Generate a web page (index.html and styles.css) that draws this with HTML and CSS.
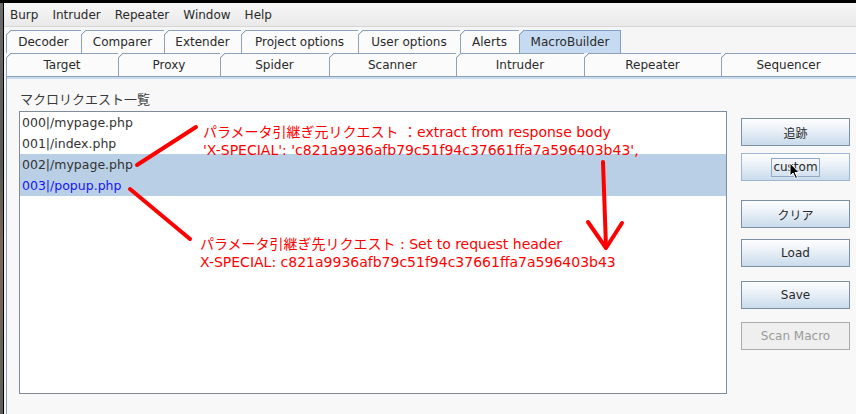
FILE: index.html
```html
<!DOCTYPE html>
<html lang="ja">
<head>
<meta charset="utf-8">
<title>MacroBuilder</title>
<link rel="stylesheet" href="styles.css">
</head>
<body>
<div class="topbar"></div>
<div class="main">
  <div class="desk"></div>
  <div class="window">
    <div class="menubar">
      <span class="menu">Burp</span>
      <span class="menu">Intruder</span>
      <span class="menu">Repeater</span>
      <span class="menu">Window</span>
      <span class="menu">Help</span>
    </div>
    <div class="tabs">
      <div class="tabrow row1">
        <div class="tab">Decoder</div>
        <div class="tab">Comparer</div>
        <div class="tab">Extender</div>
        <div class="tab">Project options</div>
        <div class="tab">User options</div>
        <div class="tab">Alerts</div>
        <div class="tab selected">MacroBuilder</div>
      </div>
      <div class="tabrow row2">
        <div class="tab">Target</div>
        <div class="tab">Proxy</div>
        <div class="tab">Spider</div>
        <div class="tab">Scanner</div>
        <div class="tab">Intruder</div>
        <div class="tab">Repeater</div>
        <div class="tab">Sequencer</div>
      </div>
    </div>
    <div class="panel">
      <div class="stripe"></div>
      <div class="panel-body">
        <div class="list-col">
          <div class="list-label">マクロリクエスト一覧</div>
          <div class="list">
            <div class="row">000|/mypage.php</div>
            <div class="row">001|/index.php</div>
            <div class="row sel">002|/mypage.php</div>
            <div class="row sel current">003|/popup.php</div>
          </div>
        </div>
        <div class="btn-col">
          <button class="btn gap-first">追跡</button>
          <button class="btn focused gap-7"><span class="focus-ring">custom</span></button>
          <button class="btn gap-19">クリア</button>
          <button class="btn gap-11">Load</button>
          <button class="btn gap-14">Save</button>
          <button class="btn disabled gap-13">Scan Macro</button>
        </div>
      </div>
    </div>
  </div>
</div>

<svg class="marks" width="856" height="414" viewBox="0 0 856 414">
  <g stroke="#ff0000" stroke-width="4" stroke-linecap="round" stroke-linejoin="round" fill="none">
    <path d="M137 165 L196 127"/>
    <path d="M130 189 L190 239"/>
    <path d="M603 162 L606 247"/>
    <path d="M588 222 L606 248 L622 223"/>
  </g>
</svg>

<div class="note note1">
  <div>パラメータ引継ぎ元リクエスト ：extract from response body</div>
  <div>'X-SPECIAL': 'c821a9936afb79c51f94c37661ffa7a596403b43',</div>
</div>
<div class="note note2">
  <div>パラメータ引継ぎ先リクエスト : Set to request header</div>
  <div>X-SPECIAL: c821a9936afb79c51f94c37661ffa7a596403b43</div>
</div>

<svg class="cursor" width="12" height="18" viewBox="0 0 12 18">
  <path d="M1 1 L1 14 L4 11 L6.5 16.5 L8.5 15.5 L6 10.5 L10 10.5 Z" fill="#000" stroke="#fff" stroke-width="1"/>
</svg>
</body>
</html>
```

FILE: styles.css
```css
* { box-sizing: border-box; }

html, body {
  margin: 0;
  padding: 0;
}

body {
  position: relative;
  width: 856px;
  height: 414px;
  overflow: hidden;
  display: flex;
  flex-direction: column;
  background: #f8f8f8;
  font-family: "DejaVu Sans", "Noto Sans CJK JP", sans-serif;
  font-size: 12px;
  color: #2a2a2a;
}

.topbar {
  height: 3px;
  background: #000;
  flex: none;
}

.main {
  flex: 1;
  display: flex;
  min-height: 0;
}

.desk {
  width: 4px;
  flex: none;
  background: linear-gradient(#6b6b6b, #585858 40%, #7a6a5a 60%, #5e5e5e);
  border-right: 1px solid #000;
}

.window {
  flex: 1;
  display: flex;
  flex-direction: column;
  background: #f6f6f6;
  min-width: 0;
}

/* menu bar */
.menubar {
  height: 24px;
  flex: none;
  display: flex;
  align-items: center;
  gap: 14px;
  padding-left: 6px;
  background: linear-gradient(#f7f7f7, #e9e9e9);
  border-bottom: 1px solid #d6d6d6;
  color: #2a2a2a;
}

/* tabs */
.tabs {
  flex: none;
  padding: 3px 0 0 2px;
}

.tabrow {
  display: grid;
  height: 23px;
}

.row1 {
  grid-template-columns: 75px 83px 77px 117px 102px 59px 102px;
}

.row2 {
  grid-template-columns: 112px 102px 109px 127px 128px 137px 1fr;
}

.tab {
  --edge: #8ea1b9;
  --fill: #fbfbfb;
  display: flex;
  align-items: center;
  justify-content: center;
  white-space: nowrap;
  color: #2a2a2a;
  background:
    linear-gradient(to right, transparent 5px, var(--edge) 5px) left top / 100% 1px no-repeat,
    linear-gradient(to bottom, transparent 5px, var(--edge) 5px) left top / 1px 100% no-repeat,
    linear-gradient(135deg, transparent 3.2px, var(--edge) 3.4px, var(--edge) 4.1px, var(--fill) 4.3px);
}

.tab:last-child {
  box-shadow: inset -1px 0 0 var(--edge);
}

.row2 .tab:last-child {
  box-shadow: none;
}

.tab.selected {
  --edge: #7f9fc6;
  --fill: #c6dbf1;
}

/* content panel */
.panel {
  flex: 1;
  display: flex;
  flex-direction: column;
  margin-left: 2px;
  border-top: 1px solid #8ea1b9;
  border-left: 1px solid #8ea1b9;
  background: #f8f8f8;
  min-height: 0;
}

.stripe {
  height: 2px;
  flex: none;
  background: #c8dcf0;
}

.panel-body {
  flex: 1;
  display: flex;
  padding: 13px 6px 20px 12px;
  min-height: 0;
}

.list-col {
  flex: 1;
  display: flex;
  flex-direction: column;
  min-width: 0;
}

.list-label {
  height: 16px;
  line-height: 16px;
  margin-bottom: 3px;
  padding-left: 1px;
  font-size: 13px;
  color: #3a3a3a;
}

.list {
  flex: 1;
  background: #fff;
  border: 1px solid #7f8c99;
}

.row {
  height: 21px;
  line-height: 21px;
  padding-left: 2px;
  font-size: 12.5px;
  color: #333;
}

.row.sel {
  background: #b8cfe5;
}

.row.current {
  color: #1414ff;
}

/* buttons */
.btn-col {
  width: 109px;
  flex: none;
  margin-left: 14px;
  display: flex;
  flex-direction: column;
}

.btn {
  height: 28px;
  flex: none;
  padding: 0;
  display: flex;
  align-items: center;
  justify-content: center;
  font-family: "DejaVu Sans", "Noto Sans CJK JP", sans-serif;
  font-size: 12px;
  color: #2a2a2a;
  border: 1px solid #7d8fa3;
  background: linear-gradient(#fdfeff, #eef3f9 35%, #c9dbec);
}

.btn.focused {
  border-color: #9fb6cf;
}

.focus-ring {
  display: inline-block;
  height: 19px;
  line-height: 17px;
  padding: 0 1px;
  border: 1px solid #93a9c3;
}

.btn.disabled {
  color: #9a9a9a;
  border-color: #ababab;
  background: #efefef;
}

.gap-first { margin-top: 26px; }
.gap-7 { margin-top: 7px; }
.gap-19 { margin-top: 19px; }
.gap-11 { margin-top: 11px; }
.gap-14 { margin-top: 14px; }
.gap-13 { margin-top: 13px; }

/* annotations drawn on top of the screenshot */
.marks {
  position: absolute;
  left: 0;
  top: 0;
  pointer-events: none;
}

.note {
  position: absolute;
  font-size: 14px;
  line-height: 18px;
  color: #ff0000;
  white-space: nowrap;
}

.note1 {
  left: 203px;
  top: 123px;
}

.note2 {
  left: 200px;
  top: 235px;
}

.cursor {
  position: absolute;
  left: 789px;
  top: 162px;
}
```
